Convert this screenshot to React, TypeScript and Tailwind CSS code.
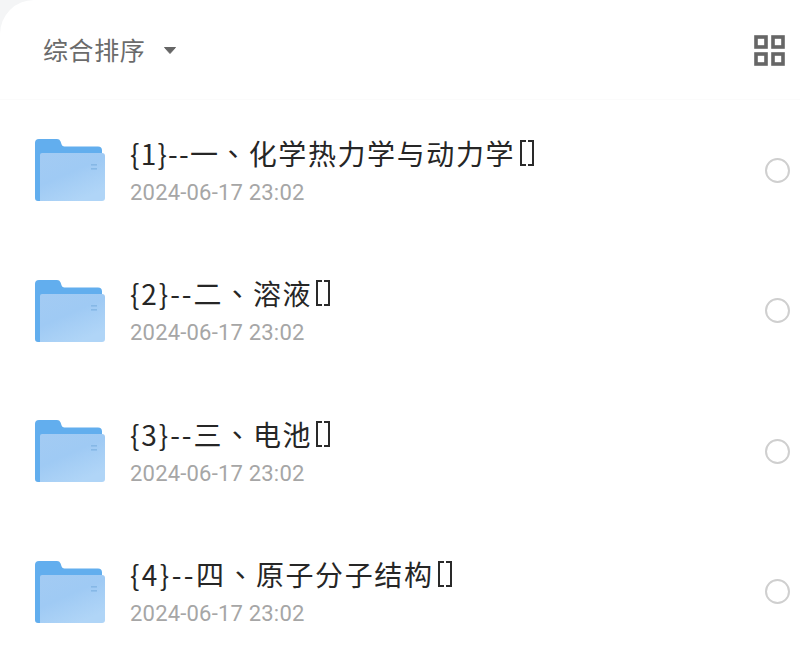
import React from "react";

const rows = [
  { pre: "{1}--一", name: "化学热力学与动力学", cls: "mt-0", preCls: "tracking-[1.2px]", tofuCls: "ml-[5px]" },
  { pre: "{2}--二", name: "溶液", cls: "-mt-[1px]", preCls: "tracking-[1.9px]", tofuCls: "ml-[4px]" },
  { pre: "{3}--三", name: "电池", cls: "-mt-[1px]", preCls: "tracking-[1.9px]", tofuCls: "ml-[4px]" },
  { pre: "{4}--四", name: "原子分子结构", cls: "-mt-[1px]", preCls: "tracking-[2.4px]", tofuCls: "ml-[4px]" },
];

function Folder() {
  return (
    <svg width="72" height="66" viewBox="0 0 72 66" className="shrink-0">
      <defs>
        <linearGradient id="front" x1="0" y1="0" x2="0.6" y2="1">
          <stop offset="0" stopColor="#a3cbf3" />
          <stop offset="0.5" stopColor="#9fcaf4" />
          <stop offset="1" stopColor="#b0d5f7" />
        </linearGradient>
      </defs>
      <path d="M1 6a4 4 0 0 1 4-4h18a4 4 0 0 1 3.6 2.4l1 3a3 3 0 0 0 3 2.1H64a4 4 0 0 1 4 4V40H68V62a2 2 0 0 1-2 2H4a3 3 0 0 1-3-3z" fill="#62aeee" />
      <path d="M6 18a2 2 0 0 1 2-2h60a3 3 0 0 1 3 3v42a3 3 0 0 1-3 3H6z" fill="url(#front)" />
      <rect x="57" y="27" width="6" height="1.6" fill="#86b8e6" />
      <rect x="57" y="31" width="6" height="1.6" fill="#86b8e6" />
    </svg>
  );
}

function Tofu({ className }: { className: string }) {
  return (
    <span className={`flex h-[26px] w-[14px] justify-between ${className}`}>
      <span className="h-full w-[6px] border-y-2 border-l-2 border-[#2a2a2a]" />
      <span className="h-full w-[6px] border-y-2 border-r-2 border-[#2a2a2a]" />
    </span>
  );
}

export default function App() {
  return (
    <div className="h-[652px] w-[800px] overflow-hidden bg-[#f4f5f6] font-['Noto_Sans_CJK_SC','Noto_Sans',sans-serif]">
      <div className="h-[700px] rounded-tl-[34px] bg-white pt-[2px]">
        <div className="flex h-[98px] items-center justify-between border-b border-[#fbfbfb] pb-[2px] pl-[43px] pr-[14px]">
          <div className="flex items-center gap-[18px]">
            <span className="text-[25px] leading-none tracking-[0.6px] text-[#6b6b6b]">综合排序</span>
            <svg width="14" height="9" viewBox="0 0 14 9" className="mt-[1px]">
              <path d="M1.5 1.5h11L7 7.5z" fill="#666" stroke="#666" strokeLinejoin="round" />
            </svg>
          </div>
          <svg width="32" height="32" viewBox="0 0 32 32" className="mt-[3px]">
            <g fill="none" stroke="#666" strokeWidth="3.6">
              <rect x="2" y="2" width="10" height="10" />
              <rect x="19" y="2" width="10" height="10" />
              <rect x="2" y="19" width="10" height="10" />
              <rect x="19" y="19" width="10" height="10" />
            </g>
          </svg>
        </div>
        <div className="flex flex-col">
          {rows.map((r) => (
            <div key={r.pre} className="flex h-[140.5px] items-center pl-[34px] pr-[10px]">
              <Folder />
              <div className={`ml-[24px] flex flex-1 flex-col ${r.cls}`}>
                <div className="flex h-[38px] items-center whitespace-nowrap text-[28px] leading-none text-[#262626]">
                  <span className={r.preCls}>{r.pre}</span>
                  <span className="font-['Noto_Sans_CJK_TC',sans-serif] tracking-[1.6px]">、</span>
                  <span className="tracking-[1.6px]">{r.name}</span>
                  <Tofu className={r.tofuCls} />
                </div>
                <div className="mt-[8px] font-['Roboto',sans-serif] text-[22px] leading-[26px] tracking-[0.2px] text-[#a6a6a6]">2024-06-17 23:02</div>
              </div>
              <div className="h-[25px] w-[25px] rounded-full border-2 border-[#cfcfcf]" />
            </div>
          ))}
        </div>
      </div>
    </div>
  );
}
